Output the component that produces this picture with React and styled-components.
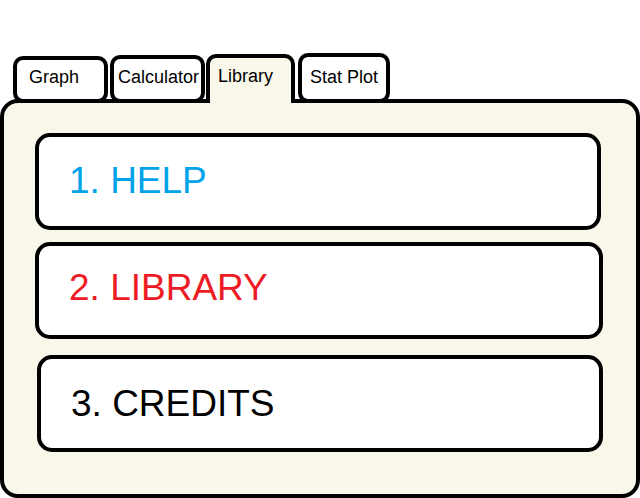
import React, { useState } from 'react';
import styled, { createGlobalStyle } from 'styled-components';

const GlobalStyle = createGlobalStyle`
  html, body {
    margin: 0;
    padding: 0;
    background: #ffffff;
  }
  body {
    font-family: 'Liberation Sans', Arial, sans-serif;
  }
`;

const Page = styled.div`
  width: 640px;
  height: 498px;
  padding-top: 53px;
  box-sizing: border-box;
  display: flex;
  flex-direction: column;
  overflow: hidden;
`;

const TabRow = styled.div`
  display: flex;
  align-items: flex-end;
  padding-left: 13px;
  margin-bottom: -4px;
  position: relative;
  z-index: 1;
`;

const Tab = styled.div`
  box-sizing: border-box;
  width: ${p => p.$width}px;
  height: ${p => p.$height}px;
  margin-left: ${p => p.$gap}px;
  padding-top: ${p => p.$top}px;
  padding-left: ${p => p.$indent}px;
  border: 4px solid #000;
  border-bottom: ${p => (p.$active ? 'none' : '4px solid #000')};
  border-radius: 10px 10px ${p => (p.$active ? '0 0' : '10px 10px')};
  background: ${p => (p.$active ? '#f9f7e9' : '#ffffff')};
  font-size: 18px;
  line-height: 20px;
  color: #000;
  white-space: nowrap;
  overflow: hidden;
  cursor: pointer;
`;

const Panel = styled.div`
  box-sizing: border-box;
  width: 640px;
  height: 399px;
  border: 4px solid #000;
  border-radius: 18px;
  background: #f9f7e9;
  padding: 30px 0 0 31px;
  display: flex;
  flex-direction: column;
`;

const Card = styled.div`
  box-sizing: border-box;
  width: ${p => p.$width}px;
  height: 97px;
  margin-top: ${p => p.$gap}px;
  margin-left: ${p => p.$shift}px;
  padding: ${p => p.$top}px 0 0 30px;
  border: 4px solid #000;
  border-radius: 15px;
  background: #ffffff;
  font-size: 37px;
  line-height: 37px;
  color: ${p => p.$color};
  cursor: pointer;
`;

const tabs = [
  { label: 'Graph', width: 95, height: 47, top: 7, indent: 12, gap: 0 },
  { label: 'Calculator', width: 95, height: 48, top: 8, indent: 4, gap: 2 },
  { label: 'Library', width: 89, height: 49, top: 8, indent: 8, gap: 1 },
  { label: 'Stat Plot', width: 92, height: 50, top: 10, indent: 8, gap: 3 }
];

const items = [
  { label: '1. HELP', color: '#00a2e8', width: 566, gap: 0, shift: 0, top: 25 },
  { label: '2. LIBRARY', color: '#ed1c24', width: 568, gap: 12, shift: 0, top: 23 },
  { label: '3. CREDITS', color: '#000000', width: 566, gap: 16, shift: 2, top: 26 }
];

export default function App() {
  const [active, setActive] = useState('Library');

  return (
    <>
      <GlobalStyle />
      <Page>
        <TabRow>
          {tabs.map(tab => (
            <Tab
              key={tab.label}
              $width={tab.width}
              $height={tab.height}
              $top={tab.top}
              $indent={tab.indent}
              $gap={tab.gap}
              $active={active === tab.label}
              onClick={() => setActive(tab.label)}
            >
              {tab.label}
            </Tab>
          ))}
        </TabRow>
        <Panel>
          {items.map(item => (
            <Card
              key={item.label}
              $color={item.color}
              $width={item.width}
              $gap={item.gap}
              $shift={item.shift}
              $top={item.top}
            >
              {item.label}
            </Card>
          ))}
        </Panel>
      </Page>
    </>
  );
}
